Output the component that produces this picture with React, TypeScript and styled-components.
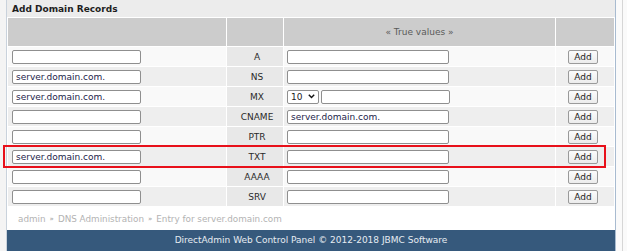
import styled, { createGlobalStyle } from 'styled-components';

const GlobalStyle = createGlobalStyle`
  html, body {
    margin: 0;
    padding: 0;
    background: #f4f4f4;
  }
  body {
    font-family: "DejaVu Sans", Verdana, sans-serif;
  }
`;

const Page = styled.div`
  position: relative;
  display: flex;
  width: 627px;
  height: 251px;
  overflow: hidden;
  background: #f4f4f4;
`;

const LeftGutter = styled.div`
  width: 6px;
  flex: none;
`;

const Main = styled.div`
  width: 608px;
  flex: none;
  display: flex;
  flex-direction: column;
  background: #fff;
  border-left: 1px solid #c9d2dc;
  border-right: 1px solid #a8bbd0;
`;

const RightGutter = styled.div`
  flex: 1;
  display: flex;
  padding-left: 6px;
  background: #fafafa;
`;

const GutterLine = styled.div`
  width: 1px;
  background: #d6d6d6;
`;

const TitleBar = styled.div`
  height: 17px;
  display: flex;
  align-items: center;
  padding-left: 5px;
  background: #ececec;
  font-size: 9px;
  font-weight: bold;
  color: #1e1e1e;
`;

const Table = styled.table`
  border-collapse: separate;
  border-spacing: 1px;
  width: 608px;
  table-layout: fixed;
  background: #fff;
`;

const HeadCell = styled.td`
  height: 28px;
  padding: 0;
  background: #cccccc;
  text-align: center;
  font-size: 9px;
  color: #5a5a5a;
`;

const Cell = styled.td<{ $alt?: boolean; $type?: boolean }>`
  height: 19px;
  padding: 0 0 0 4px;
  background: ${(p) => (p.$type ? '#e8e8e8' : p.$alt ? '#eeeeee' : '#f9f9f9')};
  text-align: ${(p) => (p.$type ? 'center' : 'left')};
  vertical-align: middle;
  font-size: 9px;
  color: #2a2a2a;
  white-space: nowrap;
`;

const ValueCell = styled(Cell)`
  padding-left: 3px;
`;

const ButtonCell = styled(Cell)`
  padding: 0 0 0 12px;
`;

const TextInput = styled.input<{ $w: number }>`
  box-sizing: border-box;
  width: ${(p) => p.$w}px;
  height: 14px;
  margin: 0;
  padding: 0 3px;
  border: 1px solid #8f8f8f;
  border-radius: 2px;
  background: #fff;
  font-family: "DejaVu Sans", Verdana, sans-serif;
  font-size: 9px;
  color: #23234a;
  vertical-align: middle;
  outline: none;
`;

const InlineGroup = styled.div`
  display: flex;
  align-items: center;
  gap: 2px;
`;

const SelectBox = styled.div`
  box-sizing: border-box;
  width: 32px;
  height: 14px;
  display: flex;
  align-items: center;
  justify-content: space-between;
  padding: 0 3px 0 3px;
  border: 1px solid #8f8f8f;
  border-radius: 2px;
  background: #fff;
  font-size: 9px;
  color: #222;
`;

const AddButton = styled.button`
  box-sizing: border-box;
  width: 30px;
  height: 14px;
  margin: 0;
  padding: 0;
  border: 1px solid #9a9a9a;
  border-radius: 2px;
  background: linear-gradient(#fbfbfb, #ececec);
  font-family: "DejaVu Sans", Verdana, sans-serif;
  font-size: 9px;
  color: #222;
  line-height: 12px;
  vertical-align: middle;
`;

const Breadcrumb = styled.div`
  height: 23px;
  display: flex;
  align-items: center;
  gap: 4px;
  padding-left: 11px;
  font-size: 8.8px;
  color: #b3b3b3;
`;

const Sep = styled.span`
  font-size: 7px;
  color: #999;
`;

const Footer = styled.div`
  flex: 1;
  display: flex;
  align-items: center;
  justify-content: center;
  padding-bottom: 2px;
  background: #36597c;
  font-size: 9px;
  color: #e6ecf2;
`;

const Highlight = styled.div`
  position: absolute;
  left: 3px;
  top: 145px;
  width: 603px;
  height: 23px;
  box-sizing: border-box;
  border: 2px solid #e8101a;
  pointer-events: none;
`;

type Row = { type: string; name: string; value: string; mx?: boolean };

const rows: Row[] = [
  { type: 'A', name: '', value: '' },
  { type: 'NS', name: 'server.domain.com.', value: '' },
  { type: 'MX', name: 'server.domain.com.', value: '', mx: true },
  { type: 'CNAME', name: '', value: 'server.domain.com.' },
  { type: 'PTR', name: '', value: '' },
  { type: 'TXT', name: 'server.domain.com.', value: '' },
  { type: 'AAAA', name: '', value: '' },
  { type: 'SRV', name: '', value: '' },
];

function Chevron() {
  return (
    <svg width="7" height="5" viewBox="0 0 7 5">
      <path d="M0.8 0.8 L3.5 3.6 L6.2 0.8" fill="none" stroke="#111" strokeWidth="1.4" />
    </svg>
  );
}

export default function App() {
  return (
    <>
      <GlobalStyle />
      <Page>
        <LeftGutter />
        <Main>
          <TitleBar>Add Domain Records</TitleBar>
          <Table>
            <colgroup>
              <col style={{ width: 218 }} />
              <col style={{ width: 56 }} />
              <col style={{ width: 271 }} />
              <col style={{ width: 58 }} />
            </colgroup>
            <tbody>
              <tr>
                <HeadCell />
                <HeadCell />
                <HeadCell>« True values »</HeadCell>
                <HeadCell />
              </tr>
              {rows.map((r, i) => {
                const alt = i % 2 === 1;
                return (
                  <tr key={r.type}>
                    <Cell $alt={alt}>
                      <TextInput $w={129} defaultValue={r.name} readOnly />
                    </Cell>
                    <Cell $alt={alt} $type>
                      {r.type}
                    </Cell>
                    <ValueCell $alt={alt}>
                      {r.mx ? (
                        <InlineGroup>
                          <SelectBox>
                            <span>10</span>
                            <Chevron />
                          </SelectBox>
                          <TextInput $w={129} defaultValue="" readOnly />
                        </InlineGroup>
                      ) : (
                        <TextInput $w={162} defaultValue={r.value} readOnly />
                      )}
                    </ValueCell>
                    <ButtonCell $alt={alt}>
                      <AddButton type="button">Add</AddButton>
                    </ButtonCell>
                  </tr>
                );
              })}
            </tbody>
          </Table>
          <Breadcrumb>
            <span>admin</span>
            <Sep>»</Sep>
            <span>DNS Administration</span>
            <Sep>»</Sep>
            <span>Entry for server.domain.com</span>
          </Breadcrumb>
          <Footer>DirectAdmin Web Control Panel © 2012-2018 JBMC Software</Footer>
        </Main>
        <RightGutter>
          <GutterLine />
        </RightGutter>
        <Highlight />
      </Page>
    </>
  );
}
